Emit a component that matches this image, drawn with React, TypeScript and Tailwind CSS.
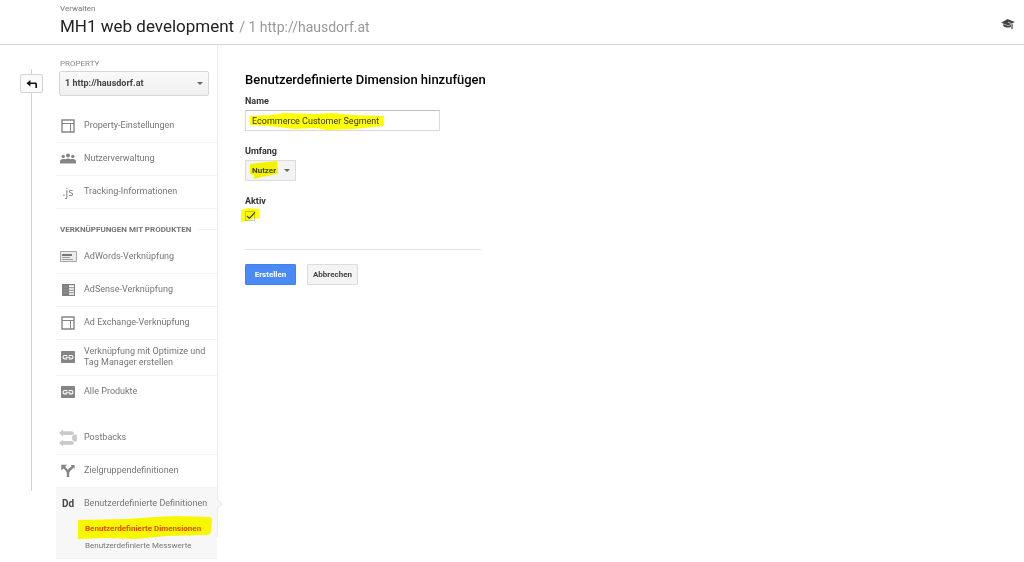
import { useState, type ReactNode } from "react";

function LayoutIcon() {
  return (
    <svg viewBox="0 0 14 14" className="w-[14px] h-[14px]" fill="none" stroke="#858585" aria-hidden="true">
      <path d="M1 1h12v12H1z" strokeWidth="1.4" />
      <path d="M1 4.5h12M9.5 4.5V13" />
    </svg>
  );
}

function UsersIcon() {
  return (
    <svg viewBox="0 0 16 11" className="w-4 h-[11px]" fill="#858585" aria-hidden="true">
      <circle cx="3.2" cy="3.4" r="1.7" />
      <circle cx="8" cy="2.4" r="2" />
      <circle cx="12.8" cy="3.4" r="1.7" />
      <path d="M0 10.5V8.2C0 6.6 2 6 3.6 6c.8 0 1.2.1 1.6.3C6 5.7 7 5.5 8 5.5s2 .2 2.8.8c.4-.2.8-.3 1.6-.3 1.6 0 3.6.6 3.6 2.2v2.3z" />
    </svg>
  );
}

function AdWordsIcon() {
  return (
    <svg viewBox="0 0 17 11" className="w-[17px] h-[11px]" aria-hidden="true">
      <path d="M.5.5h16v10H.5z" fill="#ececec" stroke="#a5a5a5" />
      <path d="M2 3h10v2H2z" fill="#777" />
      <path d="M2 6h8v1H2zM2 8h11v1H2z" fill="#9a9a9a" />
    </svg>
  );
}

function AdSenseIcon() {
  return (
    <svg viewBox="0 0 13 12" className="w-[13px] h-3" aria-hidden="true">
      <path d="M0 0h13v12H0z" fill="#808080" />
      <path d="M7 1.3h5v2H7zM7 4.2h5v1.6H7zM7 6.7h5v1.6H7zM7 9.2h5v1.6H7z" fill="#fff" />
      <path d="M1.5 3h4M1.5 5.8h4M1.5 8.6h4" stroke="#a8a8a8" strokeWidth=".6" />
    </svg>
  );
}

function LinkIcon() {
  return (
    <svg viewBox="0 0 14 12" className="w-[14px] h-3" fill="none" aria-hidden="true">
      <rect width="14" height="12" rx=".8" fill="#858585" />
      <path
        d="M6.2 4.5H3.7a1.7 1.7 0 0 0 0 3.4h2.5M7.8 4.5h2.5a1.7 1.7 0 0 1 0 3.4H7.8M4.6 6.2h4.8"
        stroke="#fff"
        strokeWidth="1.1"
      />
    </svg>
  );
}

function PostbackIcon() {
  return (
    <svg viewBox="0 0 18 18" className="w-[18px] h-[18px]" fill="#c9c9c9" aria-hidden="true">
      <path d="M0 4L4 .6v1.6h8.5c1.5 0 2.4 1 2.6 2.6l-2.4 1.2H4v1.4z" />
      <path d="M0 14l4-3.4V12h8.7l2.4 1.2c-.2 1.6-1.1 2.6-2.6 2.6H4v1.6z" />
      <path d="M17.8 5.6v6.8h-1.4a3.4 3.4 0 0 1 0-6.8z" />
    </svg>
  );
}

function SplitIcon() {
  return (
    <svg viewBox="0 0 14 13" className="w-[14px] h-[13px]" aria-hidden="true">
      <path d="M7 13V9c0-2.4-1.8-3.4-4-5.8M7 9.4C7 6.4 9 5 12.6 2.4" fill="none" stroke="#858585" strokeWidth="2.4" />
      <path d="M.3.7h5.9L.3 6.6zM9.6.9h4v3.8z" fill="#858585" />
    </svg>
  );
}

function Caret() {
  return (
    <svg
      viewBox="0 0 6 3"
      className="pointer-events-none absolute right-[6px] inset-y-0 my-auto w-[6px] h-[3px]"
      fill="#666"
      aria-hidden="true"
    >
      <path d="M0 0h6L3 3z" />
    </svg>
  );
}

type Item = { label: string; icon: ReactNode };

const propertyItems: Item[] = [
  { label: "Property-Einstellungen", icon: <LayoutIcon /> },
  { label: "Nutzerverwaltung", icon: <UsersIcon /> },
  {
    label: "Tracking-Informationen",
    icon: <span className="block font-['Open_Sans',sans-serif] text-[11px] leading-3">.js</span>,
  },
];

const productItems: Item[] = [
  { label: "AdWords-Verknüpfung", icon: <AdWordsIcon /> },
  { label: "AdSense-Verknüpfung", icon: <AdSenseIcon /> },
  { label: "Ad Exchange-Verknüpfung", icon: <LayoutIcon /> },
  { label: "Verknüpfung mit Optimize und Tag Manager erstellen", icon: <LinkIcon /> },
  { label: "Alle Produkte", icon: <LinkIcon /> },
];

const audienceItems: Item[] = [
  { label: "Postbacks", icon: <PostbackIcon /> },
  { label: "Zielgruppendefinitionen", icon: <SplitIcon /> },
];

function NavRow({ label, icon }: Item) {
  return (
    <a href="#" className="flex items-center min-h-8 pt-[6px] pb-[7px] pl-1 text-[9px] leading-[11px] text-[#757575]">
      <span className="flex w-4 shrink-0 justify-center mr-2">
        <span className="shrink-0">{icon}</span>
      </span>
      {label}
    </a>
  );
}

function NavList({ items }: { items: Item[] }) {
  return (
    <ul>
      {items.map((item) => (
        <li key={item.label} className="border-b border-[#f2f2f2]">
          <NavRow {...item} />
        </li>
      ))}
    </ul>
  );
}

// yellow text marker drawn over a control
function Marker({ className, d, box }: { className: string; d: string; box: string }) {
  return (
    <svg
      viewBox={box}
      preserveAspectRatio="none"
      className={`pointer-events-none absolute mix-blend-multiply ${className}`}
      fill="#ffff00"
      aria-hidden="true"
    >
      <path d={d} />
    </svg>
  );
}

export default function App() {
  const [name, setName] = useState("Ecommerce Customer Segment");
  const [active, setActive] = useState(true);

  return (
    <div className="min-h-screen bg-white font-['Roboto',sans-serif] text-[#333]">
      <header className="flex items-center justify-between border-b border-[#d6d6d6] pt-1 pb-[5px] pl-[60px] pr-[9px]">
        <div>
          <p className="text-[8px] leading-[10px] text-[#777]">Verwalten</p>
          <h1 className="flex items-baseline text-[17px] leading-6 text-[#222]">
            MH1 web development
            <span className="ml-[5px] text-[14px] text-[#999]">/ 1 http://hausdorf.at</span>
          </h1>
        </div>
        <button type="button" aria-label="Hilfe" className="pt-1">
          <svg viewBox="0 0 15 11" className="w-[14px] h-[10px]" fill="#444" aria-hidden="true">
            <path d="M7 0L15 3.4 8 7.2 0 4z" />
            <path d="M2.4 5.4v2.4c1.4 1.8 5.6 2.4 8.4.6V6L8 7.8z" />
            <path d="M7.5 3.4l3.6 1.6v3" fill="none" stroke="#fff" strokeWidth=".7" />
            <path d="M11.4 5.4h1.2V11h-1.4z" />
          </svg>
        </button>
      </header>

      <div className="flex">
        <div className="flex flex-col items-center shrink-0 w-[23px] ml-5 mr-[13px] pt-6 mb-[68px]">
          <div className="w-px h-[5px] bg-[#d0d0d0]" />
          <button
            type="button"
            aria-label="Zurück"
            className="flex items-center justify-center w-[23px] h-[19px] rounded-[2px] border border-[#d4d4d4] bg-[#fafafa]"
          >
            <svg viewBox="0 0 12 8" className="w-3 h-2" aria-hidden="true">
              <path d="M.5 3.2L4.4 0v2.4h4.8c1.2 0 1.8.6 1.8 1.8V8H9.4V4.8c0-.5-.2-.7-.7-.7H4.4v2.3z" fill="#111" />
            </svg>
          </button>
          <div className="w-px grow bg-[#d0d0d0]" />
        </div>

        <nav className="w-[161px] shrink-0">
          <div className="pl-[3px] pr-2 py-[14px]">
            <label htmlFor="property" className="block text-[8px] leading-[10px] mb-[2px] pl-px text-[#888]">
              PROPERTY
            </label>
            <div className="relative">
              <select
                id="property"
                className="block w-full h-[25px] appearance-none rounded-[2px] border border-[#d6d6d6] bg-linear-to-b from-[#fafafa] to-[#efefef] pl-[5px] text-[9px] font-bold text-[#444]"
              >
                <option>1 http://hausdorf.at</option>
              </select>
              <Caret />
            </div>
          </div>

          <NavList items={propertyItems} />

          <div className="flex items-center gap-[6px] pl-1 pt-[15px] pb-[6px]">
            <h2 className="text-[8px] leading-[11px] font-bold text-[#757575] whitespace-nowrap">
              VERKNÜPFUNGEN MIT PRODUKTEN
            </h2>
            <div className="grow h-px bg-[#f2f2f2]" />
          </div>
          <div className="[&_li:last-child]:border-transparent">
            <NavList items={productItems} />
          </div>

          <div className="pt-[13px]">
            <NavList items={audienceItems} />
          </div>

          <div className="relative bg-[#f7f7f7] pb-1 border-b border-[#f0f0f0]">
            <div className="absolute top-[12px] -right-[4px] z-10 size-2 rotate-45 border-t border-r border-[#ececec] bg-[#f7f7f7]" />
            <NavRow
              label="Benutzerdefinierte Definitionen"
              icon={<span className="block text-[10px] leading-3 font-bold text-[#444]">Dd</span>}
            />
            <ul className="pl-[29px] text-[8px] leading-[17px] text-[#757575]">
              <li className="relative">
                <a href="#" className="font-bold text-[#dd4b39]">
                  Benutzerdefinierte Dimensionen
                </a>
                <Marker
                  className="-left-[7px] -top-[4px] w-[135px] h-6"
                  box="0 0 135 24"
                  d="M0 4l48-1L78 1l20-1 33 1c2 0 4 1 3 5l-1 10c0 2-2 3-6 3l-38 1-32 3-28-1-29 1z"
                />
              </li>
              <li>
                <a href="#">Benutzerdefinierte Messwerte</a>
              </li>
            </ul>
          </div>
        </nav>

        <main className="grow border-l border-[#ececec] mb-[22px] pl-[27px] pt-[27px]">
          <form className="w-[236px]" onSubmit={(e) => e.preventDefault()}>
            <h2 className="text-[13px] leading-4 font-medium text-black whitespace-nowrap">
              Benutzerdefinierte Dimension hinzufügen
            </h2>

            <div className="mt-[7px]">
              <label htmlFor="name" className="block text-[9px] leading-3 font-bold">
                Name
              </label>
              <div className="relative w-[195px] mt-[3px]">
                <input
                  id="name"
                  type="text"
                  value={name}
                  onChange={(e) => setName(e.target.value)}
                  className="block w-full h-[21px] border border-[#d9d9d9] border-t-[#c0c0c0] px-[6px] text-[9px] text-[#333]"
                />
                <Marker
                  className="left-[5px] top-[2px] w-[134px] h-[18px]"
                  box="0 0 134 18"
                  d="M0 4l22-1L34 1l30 1 18-1 20 2 32 1v10l-12 1-18 2-28 1-10-2-22 1-24-3-20-1z"
                />
              </div>
            </div>

            <div className="mt-[14px]">
              <label htmlFor="scope" className="block text-[9px] leading-3 font-bold">
                Umfang
              </label>
              <div className="relative w-[51px] mt-[3px]">
                <select
                  id="scope"
                  className="block w-full h-[21px] appearance-none border border-[#dcdcdc] bg-[#f3f3f3] pl-[6px] text-[8px] font-bold text-[#444]"
                >
                  <option>Nutzer</option>
                  <option>Treffer</option>
                </select>
                <Caret />
                <Marker
                  className="left-[5px] top-px w-7 h-[18px]"
                  box="0 0 28 18"
                  d="M0 3l16-2 11-1 1 12-5 2-12 2-7 2V14l-4-1z"
                />
              </div>
            </div>

            <div className="mt-[14px]">
              <label htmlFor="active" className="block text-[9px] leading-3 font-bold">
                Aktiv
              </label>
              <div className="relative flex w-[11px] mt-1">
                <input
                  id="active"
                  type="checkbox"
                  checked={active}
                  onChange={(e) => setActive(e.target.checked)}
                  className="size-[10px] appearance-none border border-[#c6c6c6]"
                />
                {active && (
                  <svg viewBox="0 0 12 10" className="pointer-events-none absolute left-0 top-0 w-3 h-[10px]" aria-hidden="true">
                    <path d="M2 5l2.4 2.4L10 1.4" fill="none" stroke="#444" strokeWidth="1.3" />
                  </svg>
                )}
                <Marker
                  className="-left-1 -top-[3px] w-[19px] h-[14px]"
                  box="0 0 19 14"
                  d="M0 2l5-1V0l13 1 1 9-8 1-6 2-5 1z"
                />
              </div>
            </div>

            <div className="mt-7 flex gap-[11px] border-t border-[#e2e2e2] pt-[14px] text-[8px] font-bold">
              <button type="submit" className="w-[51px] h-[21px] rounded-[1px] border border-[#3e82f0] bg-[#4a8af4] text-white">
                Erstellen
              </button>
              <button type="button" className="w-[51px] h-[21px] rounded-[1px] border border-[#dcdcdc] bg-[#f4f4f4] text-[#444]">
                Abbrechen
              </button>
            </div>
          </form>
        </main>
      </div>
    </div>
  );
}
